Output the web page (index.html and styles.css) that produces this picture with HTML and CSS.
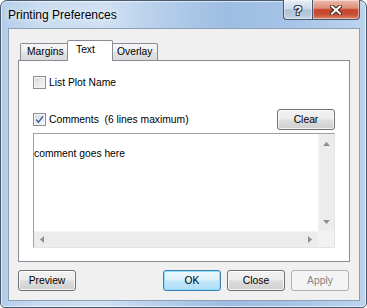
FILE: index.html
```html
<!DOCTYPE html>
<html>
<head>
<meta charset="utf-8">
<title>Printing Preferences</title>
<link rel="stylesheet" href="styles.css">
</head>
<body>
<div class="window">
  <div class="titlebar">
    <span class="title">Printing Preferences</span>
    <div class="caption-buttons">
      <div class="cap-btn help"><span class="help-glyph">?</span></div>
      <div class="cap-btn close">
        <svg width="12" height="10" viewBox="0 0 12 10">
          <path d="M2 1.5 L10 8.5 M10 1.5 L2 8.5" stroke="#3b2420" stroke-width="4" stroke-linecap="square" fill="none"/>
          <path d="M2 1.5 L10 8.5 M10 1.5 L2 8.5" stroke="#ffffff" stroke-width="2" stroke-linecap="square" fill="none"/>
        </svg>
      </div>
    </div>
  </div>
  <div class="client">
    <div class="tabs">
      <div class="tab tab-margins">Margins</div>
      <div class="tab tab-text active">Text</div>
      <div class="tab tab-overlay">Overlay</div>
    </div>
    <div class="panel">
      <div class="check-row">
        <span class="box"></span>
        <span class="label">List Plot Name</span>
      </div>
      <div class="comments-row">
        <div class="check-row">
          <span class="box checked">
            <svg width="11" height="11" viewBox="0 0 11 11">
              <path d="M2.2 5.6 L4.5 8.2 L9 2.2" stroke="#ffffff" stroke-width="3" fill="none" stroke-linejoin="round"/>
              <path d="M2.2 5.6 L4.5 8.2 L9 2.2" stroke="#4461a8" stroke-width="1.6" fill="none"/>
            </svg>
          </span>
          <span class="label pre">Comments  (6 lines maximum)</span>
        </div>
        <button class="btn clear">Clear</button>
      </div>
      <div class="textbox">
        <div class="content">comment goes here</div>
        <div class="vscroll">
          <svg class="arrow" width="7" height="4" viewBox="0 0 7 4"><polygon points="0,4 3.5,0 7,4" fill="#8e8e8e"/></svg>
          <svg class="arrow" width="7" height="4" viewBox="0 0 7 4"><polygon points="0,0 7,0 3.5,4" fill="#8e8e8e"/></svg>
        </div>
        <div class="hscroll">
          <svg class="arrow" width="4" height="7" viewBox="0 0 4 7"><polygon points="4,0 4,7 0,3.5" fill="#8e8e8e"/></svg>
          <svg class="arrow" width="4" height="7" viewBox="0 0 4 7"><polygon points="0,0 0,7 4,3.5" fill="#8e8e8e"/></svg>
        </div>
        <div class="corner"></div>
      </div>
    </div>
    <div class="footer">
      <button class="btn">Preview</button>
      <button class="btn default push">OK</button>
      <button class="btn">Close</button>
      <button class="btn disabled">Apply</button>
    </div>
  </div>
</div>
</body>
</html>
```

FILE: styles.css
```css
* {
  box-sizing: border-box;
}

html, body {
  margin: 0;
  padding: 0;
}

body {
  width: 367px;
  height: 308px;
  overflow: hidden;
  background: #ffffff;
  font-family: "Liberation Sans", Arial, sans-serif;
  font-size: 10.3px;
  color: #000000;
}

.window {
  width: 367px;
  height: 308px;
  border: 1px solid #4a5a6e;
  border-radius: 7px 7px 5px 5px;
  padding: 0 6px 6px 7px;
  background: linear-gradient(to right, #b3cdea 0%, #c8dbf0 10%, #cfe0f3 28%, #b4cdea 45%, #9dbde2 62%, #a5c3e6 78%, #bdd4ee 100%);
  box-shadow: inset 0 0 0 1px rgba(255, 255, 255, 0.6);
  display: flex;
  flex-direction: column;
}

.titlebar {
  height: 27px;
  display: flex;
  align-items: flex-start;
}

.title {
  font-size: 12px;
  line-height: 28px;
  color: #000000;
  text-shadow: 0 0 8px rgba(255, 255, 255, 0.95), 0 0 4px rgba(255, 255, 255, 0.8);
}

.caption-buttons {
  display: flex;
  margin-left: auto;
  margin-top: -1px;
}

.cap-btn {
  height: 20px;
  border: 1px solid #46566c;
  border-top: none;
  display: flex;
  align-items: center;
  justify-content: center;
  box-shadow: inset 0 0 0 1px rgba(255, 255, 255, 0.45);
}

.help {
  width: 29px;
  border-right: none;
  border-radius: 0 0 0 4px;
  background: linear-gradient(#e6edf5 0%, #cfdae7 45%, #afc1d5 52%, #b9cadd 80%, #c9d7e6 100%);
}

.help-glyph {
  font-family: "Liberation Sans", Arial, sans-serif;
  font-weight: bold;
  font-size: 13px;
  line-height: 13px;
  color: #ffffff;
  margin-top: 1px;
  text-shadow: 1px 0 0 #34445a, -1px 0 0 #34445a, 0 1px 0 #34445a, 0 -1px 0 #34445a,
    1px 1px 0 #34445a, -1px -1px 0 #34445a, 1px -1px 0 #34445a, -1px 1px 0 #34445a;
}

.close {
  width: 48px;
  border-radius: 0 0 4px 0;
  background: linear-gradient(#eebcae 0%, #de907a 42%, #c7442c 52%, #c94d33 75%, #dd8466 100%);
}

.client {
  flex: 1;
  border: 1px solid #8f9eb2;
  background: #f0f0f0;
  padding: 11px 9px 9px 9px;
  display: flex;
  flex-direction: column;
}

.tabs {
  display: flex;
  align-items: flex-end;
  height: 21px;
  margin-bottom: -1px;
  padding-left: 2px;
  position: relative;
  z-index: 1;
}

.tab {
  height: 17px;
  margin-bottom: 1px;
  border: 1px solid #898c95;
  border-bottom: none;
  line-height: 16px;
  padding-left: 6px;
  white-space: nowrap;
  background: linear-gradient(#f6f6f6 0%, #eeeeee 50%, #e2e2e2 51%, #dadada 100%);
  border-radius: 2px 2px 0 0;
}

.tab-margins {
  width: 50px;
}

.tab-text {
  width: 46px;
  margin-left: -3px;
  margin-right: -3px;
  padding-left: 8px;
}

.tab-overlay {
  width: 48px;
}

.tab.active {
  height: 21px;
  margin-bottom: 0;
  line-height: 17px;
  background: #ffffff;
  position: relative;
  z-index: 2;
}

.panel {
  height: 202px;
  border: 1px solid #898c95;
  background: #ffffff;
  padding: 15px 14px 13px 14px;
  display: flex;
  flex-direction: column;
}

.check-row {
  display: flex;
  align-items: center;
  height: 13px;
}

.box {
  width: 13px;
  height: 13px;
  flex: none;
  border: 1px solid #8e8f8f;
  margin-right: 3px;
  background: linear-gradient(135deg, #d2d4d8 0%, #e6e7e9 45%, #f7f7f7 100%);
  box-shadow: inset 0 0 0 1px #f5f5f5;
  display: flex;
  align-items: center;
  justify-content: center;
}

.label {
  line-height: 13px;
  white-space: nowrap;
}

.pre {
  white-space: pre;
}

.comments-row {
  display: flex;
  align-items: center;
  justify-content: space-between;
  height: 21px;
  margin-top: 20px;
}

.btn {
  width: 58px;
  height: 21px;
  padding: 0;
  border: 1px solid #707070;
  border-radius: 3px;
  font-family: "Liberation Sans", Arial, sans-serif;
  font-size: 10.3px;
  line-height: 19px;
  color: #000000;
  text-align: center;
  background: linear-gradient(#f2f2f2 0%, #ebebeb 48%, #dddddd 52%, #cfcfcf 100%);
  box-shadow: inset 0 0 0 1px rgba(255, 255, 255, 0.75);
}

.btn.default {
  border-color: #3c7fb1;
  background: linear-gradient(#ecf7fd 0%, #dcf1fc 48%, #c2e7fb 52%, #aedcf6 100%);
  box-shadow: inset 0 0 0 1px #8fdcfb;
}

.btn.disabled {
  border-color: #adb2b5;
  background: #f4f4f4;
  color: #838383;
  box-shadow: none;
}

.textbox {
  margin-top: 3px;
  height: 115px;
  border: 1px solid;
  border-color: #a0a0a0 #e3e3e3 #e3e3e3 #a0a0a0;
  display: grid;
  grid-template-columns: 1fr 16px;
  grid-template-rows: 1fr 16px;
}

.content {
  padding-top: 13px;
  line-height: 13px;
  white-space: nowrap;
  overflow: hidden;
}

.vscroll {
  background: #ececec;
  border-left: 1px solid #f4f4f4;
  display: flex;
  flex-direction: column;
  justify-content: space-between;
  align-items: center;
  padding: 8px 0 7px 0;
}

.hscroll {
  background: #ececec;
  border-top: 1px solid #f4f4f4;
  display: flex;
  justify-content: space-between;
  align-items: center;
  padding: 0 6px;
}

.corner {
  background: #f2f2f2;
}

.arrow {
  display: block;
}

.footer {
  display: flex;
  gap: 6px;
  margin-top: 8px;
  height: 21px;
  padding-right: 1px;
}

.push {
  margin-left: auto;
}
```
